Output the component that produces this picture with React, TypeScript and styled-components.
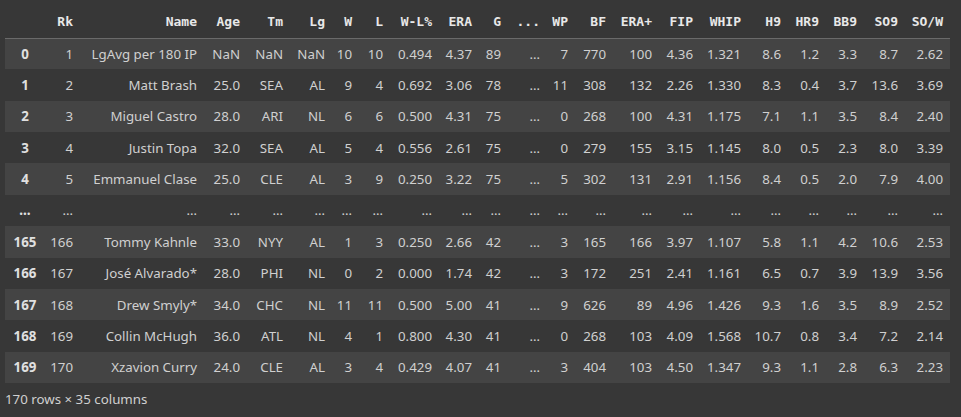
import React from "react";
import styled, { createGlobalStyle } from "styled-components";

const Global = createGlobalStyle`
  html, body { margin: 0; padding: 0; background: #373737; }
  body { font-family: "Noto Sans", "Liberation Sans", sans-serif; }
`;

const Page = styled.div`
  width: 961px;
  height: 417px;
  background: #373737;
  padding: 5px 11px 0 5px;
  box-sizing: border-box;
  overflow: hidden;
`;

const Table = styled.table`
  border-collapse: collapse;
  border-spacing: 0;
  table-layout: fixed;
  width: 945px;
  font-size: 13.3px;
  color: #d0d0d0;
`;

const Col = styled.col<{ $w: number }>`
  width: ${(p) => p.$w}px;
`;

const HeadRow = styled.tr`
  height: 33px;
  border-bottom: 1px solid #6a6a6a;
`;

const HeadCell = styled.th`
  font-family: "DejaVu Sans Mono", "Liberation Mono", monospace;
  font-weight: bold;
  font-size: 13px;
  color: #e8e8e8;
  text-align: right;
  padding: 0 7px 0 0;
  white-space: nowrap;
  overflow: visible;
`;

const BodyRow = styled.tr<{ $stripe: boolean }>`
  height: 31.36px;
  background: ${(p) => (p.$stripe ? "#444444" : "transparent")};
`;

const IndexCell = styled.th`
  font-weight: bold;
  font-size: 13.3px;
  color: #e0e0e0;
  text-align: center;
  padding: 0;
  white-space: nowrap;
`;

const Cell = styled.td`
  text-align: right;
  padding: 0 7px 0 0;
  white-space: nowrap;
  overflow: visible;
`;

const Footer = styled.div`
  margin-top: 7px;
  font-size: 13.3px;
  color: #d0d0d0;
  line-height: 18px;
`;

const widths = [40, 35, 124, 43, 43, 42, 27, 31, 49, 40, 29, 39, 28, 38, 46, 41, 48, 40, 38, 38, 41, 45];
const headers = ["", "Rk", "Name", "Age", "Tm", "Lg", "W", "L", "W-L%", "ERA", "G", "...", "WP", "BF", "ERA+", "FIP", "WHIP", "H9", "HR9", "BB9", "SO9", "SO/W"];

const E = "…";
const rows: string[][] = [
  ["0", "1", "LgAvg per 180 IP", "NaN", "NaN", "NaN", "10", "10", "0.494", "4.37", "89", E, "7", "770", "100", "4.36", "1.321", "8.6", "1.2", "3.3", "8.7", "2.62"],
  ["1", "2", "Matt Brash", "25.0", "SEA", "AL", "9", "4", "0.692", "3.06", "78", E, "11", "308", "132", "2.26", "1.330", "8.3", "0.4", "3.7", "13.6", "3.69"],
  ["2", "3", "Miguel Castro", "28.0", "ARI", "NL", "6", "6", "0.500", "4.31", "75", E, "0", "268", "100", "4.31", "1.175", "7.1", "1.1", "3.5", "8.4", "2.40"],
  ["3", "4", "Justin Topa", "32.0", "SEA", "AL", "5", "4", "0.556", "2.61", "75", E, "0", "279", "155", "3.15", "1.145", "8.0", "0.5", "2.3", "8.0", "3.39"],
  ["4", "5", "Emmanuel Clase", "25.0", "CLE", "AL", "3", "9", "0.250", "3.22", "75", E, "5", "302", "131", "2.91", "1.156", "8.4", "0.5", "2.0", "7.9", "4.00"],
  Array(22).fill(E),
  ["165", "166", "Tommy Kahnle", "33.0", "NYY", "AL", "1", "3", "0.250", "2.66", "42", E, "3", "165", "166", "3.97", "1.107", "5.8", "1.1", "4.2", "10.6", "2.53"],
  ["166", "167", "José Alvarado*", "28.0", "PHI", "NL", "0", "2", "0.000", "1.74", "42", E, "3", "172", "251", "2.41", "1.161", "6.5", "0.7", "3.9", "13.9", "3.56"],
  ["167", "168", "Drew Smyly*", "34.0", "CHC", "NL", "11", "11", "0.500", "5.00", "41", E, "9", "626", "89", "4.96", "1.426", "9.3", "1.6", "3.5", "8.9", "2.52"],
  ["168", "169", "Collin McHugh", "36.0", "ATL", "NL", "4", "1", "0.800", "4.30", "41", E, "0", "268", "103", "4.09", "1.568", "10.7", "0.8", "3.4", "7.2", "2.14"],
  ["169", "170", "Xzavion Curry", "24.0", "CLE", "AL", "3", "4", "0.429", "4.07", "41", E, "3", "404", "103", "4.50", "1.347", "9.3", "1.1", "2.8", "6.3", "2.23"],
];

export default function App() {
  return (
    <Page>
      <Global />
      <Table>
        <colgroup>
          {widths.map((w, i) => (
            <Col key={i} $w={w} />
          ))}
        </colgroup>
        <thead>
          <HeadRow>
            {headers.map((h, i) => (
              <HeadCell key={i}>{h}</HeadCell>
            ))}
          </HeadRow>
        </thead>
        <tbody>
          {rows.map((r, ri) => (
            <BodyRow key={ri} $stripe={ri % 2 === 0}>
              <IndexCell>{r[0]}</IndexCell>
              {r.slice(1).map((c, ci) => (
                <Cell key={ci}>{c}</Cell>
              ))}
            </BodyRow>
          ))}
        </tbody>
      </Table>
      <Footer>170 rows × 35 columns</Footer>
    </Page>
  );
}
